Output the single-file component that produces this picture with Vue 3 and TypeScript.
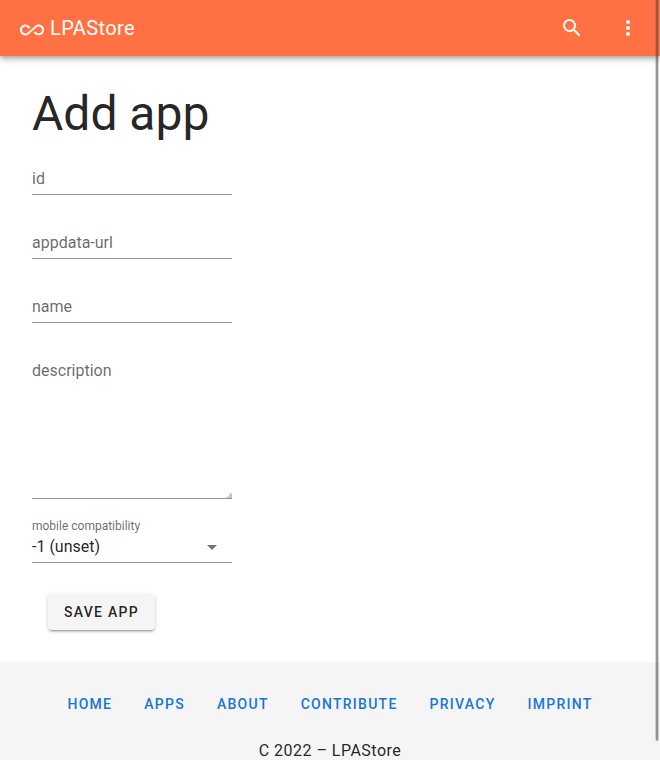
<script setup lang="ts">
import { computed, onBeforeUnmount, onMounted, reactive, ref } from 'vue'

interface AppForm {
  id: string
  appdataUrl: string
  name: string
  description: string
  compatibility: number
}

const form = reactive<AppForm>({
  id: '',
  appdataUrl: '',
  name: '',
  description: '',
  compatibility: -1,
})

const links: string[] = ['Home', 'Apps', 'About', 'Contribute', 'Privacy', 'Imprint']

const pageHeight = ref(1)
const viewHeight = ref(1)
const scrollTop = ref(0)

function measure(): void {
  const root = document.documentElement
  pageHeight.value = root.scrollHeight
  viewHeight.value = window.innerHeight
  scrollTop.value = window.scrollY
}

const thumbStyle = computed(() => ({
  height: `${(viewHeight.value / pageHeight.value) * 100}%`,
  top: `${(scrollTop.value / pageHeight.value) * 100}%`,
}))

onMounted(() => {
  measure()
  window.addEventListener('scroll', measure)
  window.addEventListener('resize', measure)
})

onBeforeUnmount(() => {
  window.removeEventListener('scroll', measure)
  window.removeEventListener('resize', measure)
})
</script>

<template>
  <div class="app">
    <header class="toolbar">
      <a class="brand" href="#">
        <svg class="logo" viewBox="0 0 24 24" aria-hidden="true">
          <path
            d="M18.6 6.62c-1.44 0-2.8.56-3.77 1.53L7.8 14.39c-.64.64-1.49.99-2.4.99-1.87 0-3.39-1.51-3.39-3.38S3.53 8.62 5.4 8.62c.91 0 1.76.35 2.44 1.03l1.13 1 1.51-1.34L9.22 8.2A5.37 5.37 0 0 0 5.4 6.62C2.42 6.62 0 9.04 0 12s2.42 5.38 5.4 5.38c1.44 0 2.8-.56 3.77-1.53l7.03-6.24c.64-.64 1.49-.99 2.4-.99 1.87 0 3.39 1.51 3.39 3.38s-1.52 3.38-3.39 3.38c-.9 0-1.76-.35-2.44-1.03l-1.14-1.01-1.51 1.34 1.27 1.12a5.386 5.386 0 0 0 3.82 1.57c2.98 0 5.4-2.41 5.4-5.38s-2.42-5.37-5.4-5.37z"
          />
        </svg>
        <span>LPAStore</span>
      </a>
      <button class="icon-button" type="button" aria-label="Search">
        <svg viewBox="0 0 24 24" aria-hidden="true">
          <path
            d="M9.5 3A6.5 6.5 0 0 1 16 9.5c0 1.61-.59 3.09-1.56 4.23l.27.27h.79l5 5-1.5 1.5-5-5v-.79l-.27-.27A6.516 6.516 0 0 1 9.5 16a6.5 6.5 0 0 1 0-13m0 2C7 5 5 7 5 9.5S7 14 9.5 14 14 12 14 9.5 12 5 9.5 5z"
          />
        </svg>
      </button>
      <button class="icon-button" type="button" aria-label="Menu">
        <svg viewBox="0 0 24 24" aria-hidden="true">
          <path
            d="M12 16a2 2 0 1 1 0 4 2 2 0 0 1 0-4m0-6a2 2 0 1 1 0 4 2 2 0 0 1 0-4m0-6a2 2 0 1 1 0 4 2 2 0 0 1 0-4z"
          />
        </svg>
      </button>
    </header>

    <main class="content">
      <h1>Add app</h1>
      <form class="form" @submit.prevent>
        <div class="field">
          <input id="app-id" v-model="form.id" type="text" placeholder=" " />
          <label for="app-id">id</label>
        </div>
        <div class="field">
          <input id="app-url" v-model="form.appdataUrl" type="text" placeholder=" " />
          <label for="app-url">appdata-url</label>
        </div>
        <div class="field">
          <input id="app-name" v-model="form.name" type="text" placeholder=" " />
          <label for="app-name">name</label>
        </div>
        <div class="field">
          <textarea id="app-description" v-model="form.description" placeholder=" "></textarea>
          <label for="app-description">description</label>
        </div>
        <div class="field">
          <select id="app-compat" v-model="form.compatibility">
            <option :value="-1">-1 (unset)</option>
          </select>
          <label class="raised" for="app-compat">mobile compatibility</label>
          <svg class="arrow" viewBox="0 0 24 24" aria-hidden="true">
            <path d="M7 10l5 5 5-5z" />
          </svg>
        </div>
        <button class="save" type="submit">Save app</button>
      </form>
    </main>

    <footer class="footer">
      <nav class="links">
        <a v-for="link in links" :key="link" :href="`#${link.toLowerCase()}`">{{ link }}</a>
      </nav>
      <p>C 2022 – LPAStore</p>
    </footer>

    <div class="scroll-track" aria-hidden="true">
      <div class="scroll-thumb" :style="thumbStyle"></div>
    </div>
  </div>
</template>

<style>
html {
  scrollbar-width: none;
}
</style>

<style scoped>
.app {
  display: flex;
  flex-direction: column;
  min-height: 100vh;
  background: #fff;
  color: rgba(0, 0, 0, 0.87);
  font-family: Roboto, sans-serif;
  font-size: 16px;
  line-height: 24px;
}

.app *,
.app *::before {
  box-sizing: border-box;
}

.toolbar {
  position: sticky;
  top: 0;
  z-index: 2;
  display: flex;
  align-items: center;
  gap: 8px;
  height: 56px;
  padding: 0 8px 0 20px;
  background: #ff7043;
  color: #fff;
  box-shadow: 0 2px 4px -1px rgba(0, 0, 0, 0.2), 0 4px 5px 0 rgba(0, 0, 0, 0.14),
    0 1px 10px 0 rgba(0, 0, 0, 0.12);
}

.toolbar svg {
  width: 24px;
  height: 24px;
  fill: currentColor;
}

.brand {
  display: flex;
  align-items: center;
  gap: 6px;
  margin-right: auto;
  color: inherit;
  font-size: 20px;
  letter-spacing: 0.02em;
  text-decoration: none;
}

.toolbar .logo {
  margin-top: 4px;
}

.icon-button {
  display: flex;
  align-items: center;
  justify-content: center;
  width: 48px;
  height: 48px;
  padding: 0;
  border: 0;
  border-radius: 50%;
  background: transparent;
  color: inherit;
}

.content {
  flex: 1;
  padding: 32px;
}

h1 {
  margin: 0 0 11px;
  font-size: 48px;
  font-weight: 400;
  line-height: 52px;
}

.form {
  display: flex;
  flex-direction: column;
  align-items: flex-start;
  gap: 20px;
}

.field {
  display: grid;
  width: 200px;
}

.field > * {
  grid-area: 1 / 1;
}

.field input,
.field textarea,
.field select {
  width: 100%;
  height: 44px;
  margin: 0;
  padding: 12px 0 0;
  border: 0;
  border-bottom: 1px solid #949494;
  border-radius: 0;
  outline: 0;
  background: transparent;
  color: inherit;
  font: inherit;
  appearance: none;
}

.field textarea {
  height: 156px;
  padding-top: 16px;
  resize: both;
}

.field textarea::-webkit-resizer {
  background: linear-gradient(135deg, transparent 50%, #c4c4c4 50%) right bottom / 6px 6px
    no-repeat;
}

.field label {
  align-self: start;
  padding-top: 16px;
  color: rgba(0, 0, 0, 0.6);
  line-height: 24px;
  pointer-events: none;
}

.field label.raised,
.field :focus + label,
.field :not(:placeholder-shown):not(select) + label {
  padding-top: 0;
  font-size: 12px;
  line-height: 14px;
}

.arrow {
  align-self: end;
  justify-self: end;
  width: 24px;
  height: 24px;
  margin: 0 8px 4px 0;
  fill: rgba(0, 0, 0, 0.54);
  pointer-events: none;
}

.save {
  height: 36px;
  margin: 11px 16px 0;
  padding: 0 16px;
  border: 0;
  border-radius: 4px;
  background: #f5f5f5;
  color: inherit;
  font: inherit;
  font-size: 14px;
  font-weight: 500;
  letter-spacing: 0.09em;
  text-transform: uppercase;
  box-shadow: 0 3px 1px -2px rgba(0, 0, 0, 0.2), 0 2px 2px 0 rgba(0, 0, 0, 0.14),
    0 1px 5px 0 rgba(0, 0, 0, 0.12);
}

.footer {
  display: flex;
  flex-direction: column;
  align-items: center;
  gap: 16px;
  padding: 24px 16px 16px;
  background: #f5f5f5;
}

.links {
  display: flex;
  flex-wrap: wrap;
  justify-content: center;
}

.links a {
  padding: 0 16px;
  color: #1976d2;
  font-size: 14px;
  font-weight: 500;
  line-height: 36px;
  letter-spacing: 0.09em;
  text-decoration: none;
  text-transform: uppercase;
}

.footer p {
  margin: 0;
  letter-spacing: 0.03em;
  line-height: 26px;
}

.scroll-track {
  position: fixed;
  top: 0;
  right: 1px;
  bottom: 0;
  z-index: 3;
  width: 4px;
  pointer-events: none;
}

.scroll-thumb {
  position: relative;
  border: solid rgba(60, 64, 64, 0.2);
  border-width: 0 1px;
  border-radius: 0 0 2px 2px;
  background: rgba(60, 64, 64, 0.55);
  background-clip: padding-box;
}
</style>
